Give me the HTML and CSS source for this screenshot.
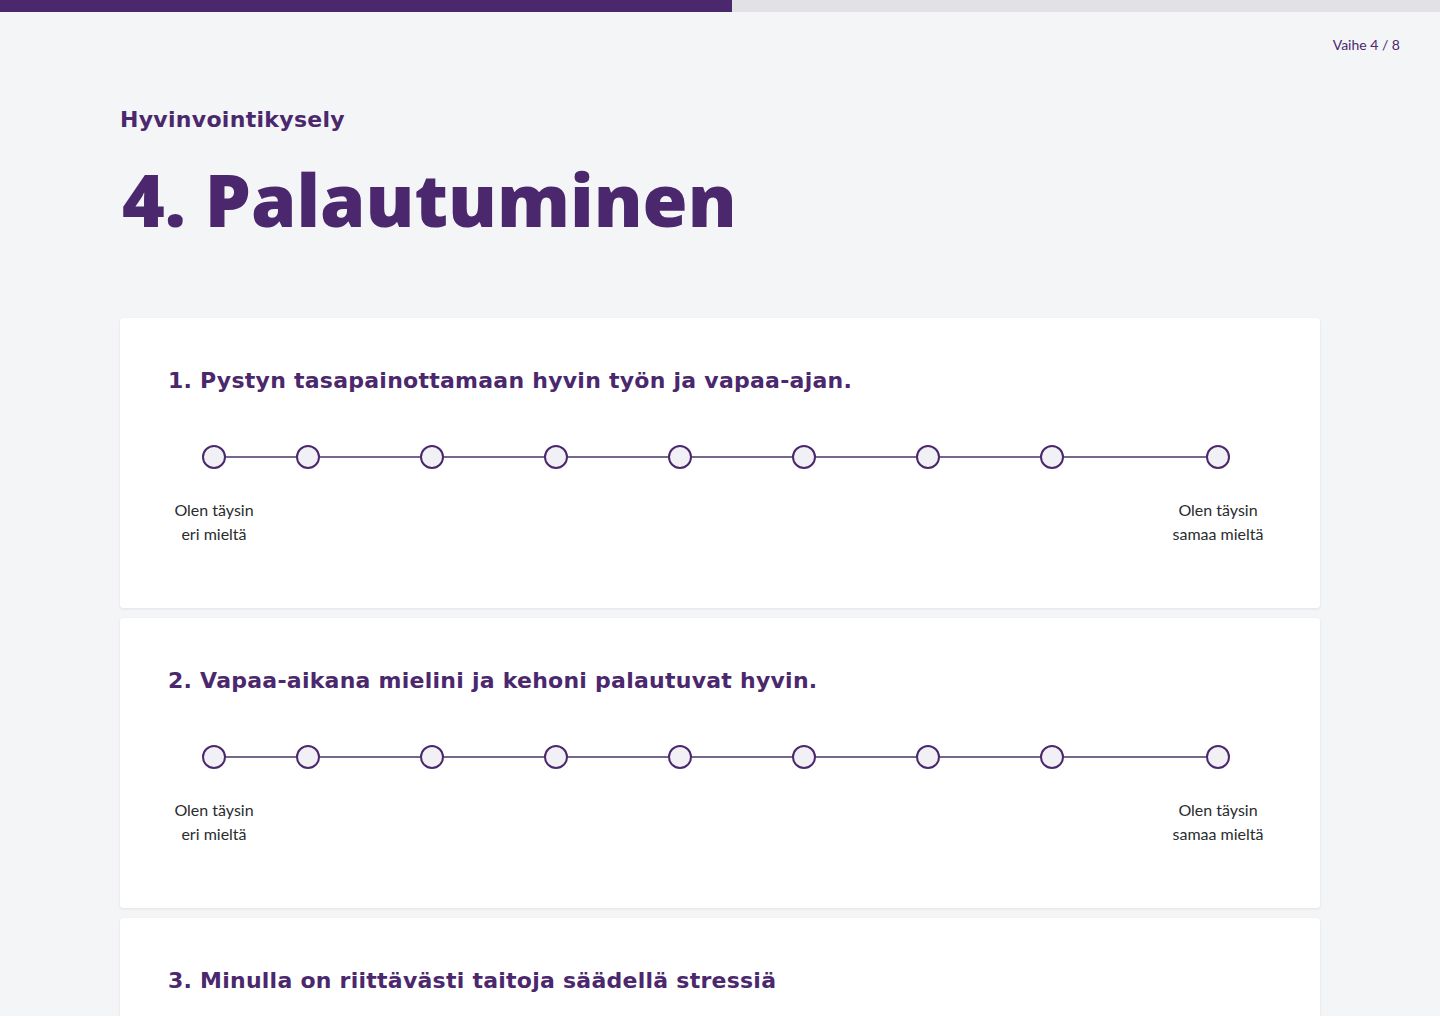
FILE: index.html
```html
<!DOCTYPE html>
<html lang="fi">
<head>
<meta charset="utf-8">
<title>Hyvinvointikysely</title>
<link rel="stylesheet" href="styles.css">
</head>
<body>
<div class="progress"><div class="progress-fill" style="width:50.83%"></div></div>
<div class="step">Vaihe 4 / 8</div>
<main class="wrap">
  <div class="eyebrow">Hyvinvointikysely</div>
  <h1 class="title">4. Palautuminen</h1>

  <section class="card">
    <h2 class="q">1. Pystyn tasapainottamaan hyvin työn ja vapaa-ajan.</h2>
    <div class="scale">
      <div class="end first"><span class="dot"></span><span class="lbl">Olen täysin<br>eri mieltä</span></div>
      <span class="dot"></span><span class="dot"></span><span class="dot"></span><span class="dot"></span><span class="dot"></span><span class="dot"></span><span class="dot"></span>
      <div class="end last"><span class="dot"></span><span class="lbl">Olen täysin<br>samaa mieltä</span></div>
    </div>
  </section>

  <section class="card">
    <h2 class="q">2. Vapaa-aikana mielini ja kehoni palautuvat hyvin.</h2>
    <div class="scale">
      <div class="end first"><span class="dot"></span><span class="lbl">Olen täysin<br>eri mieltä</span></div>
      <span class="dot"></span><span class="dot"></span><span class="dot"></span><span class="dot"></span><span class="dot"></span><span class="dot"></span><span class="dot"></span>
      <div class="end last"><span class="dot"></span><span class="lbl">Olen täysin<br>samaa mieltä</span></div>
    </div>
  </section>

  <section class="card">
    <h2 class="q">3. Minulla on riittävästi taitoja säädellä stressiä</h2>
    <div class="scale">
      <div class="end first"><span class="dot"></span><span class="lbl">Olen täysin<br>eri mieltä</span></div>
      <span class="dot"></span><span class="dot"></span><span class="dot"></span><span class="dot"></span><span class="dot"></span><span class="dot"></span><span class="dot"></span>
      <div class="end last"><span class="dot"></span><span class="lbl">Olen täysin<br>samaa mieltä</span></div>
    </div>
  </section>
</main>
</body>
</html>
```

FILE: styles.css
```css
* { box-sizing: border-box; }
html, body { margin: 0; padding: 0; }
body {
  background: #f4f5f7;
  font-family: "Lato", "Noto Sans", sans-serif;
  color: #2a2c2e;
  overflow: hidden;
  height: 1016px;
}
.progress {
  height: 12px;
  background: #e2e1e5;
}
.progress-fill {
  height: 100%;
  background: #4b286d;
}
.step {
  text-align: right;
  padding: 25px 40px 0 0;
  font-size: 14px;
  line-height: 16px;
  color: #4b286d;
}
.wrap {
  width: 1200px;
  margin: 0 auto;
}
.eyebrow {
  margin-top: 51px;
  font-family: "DejaVu Sans", sans-serif;
  font-weight: 700;
  font-size: 22px;
  line-height: 32px;
  color: #4b286d;
  letter-spacing: 0.3px;
}
.title {
  margin: 13px 0 0 2px;
  font-family: "Open Sans", sans-serif;
  font-weight: 800;
  font-size: 73px;
  line-height: 100px;
  letter-spacing: 0px;
  color: #4b286d;
}
.card {
  background: #fff;
  border-radius: 3px;
  box-shadow: 0 1px 3px rgba(40, 30, 70, 0.08), 0 0 1px rgba(40, 30, 70, 0.06);
  padding: 48px 48px 62px 48px;
  margin-bottom: 10px;
}
.wrap .card:first-of-type { margin-top: 69px; }
.q {
  margin: 0;
  font-family: "DejaVu Sans", sans-serif;
  font-weight: 700;
  font-size: 22px;
  line-height: 30px;
  color: #4b286d;
  letter-spacing: 0.25px;
}
.scale {
  position: relative;
  display: flex;
  align-items: flex-start;
  gap: 100px;
  margin-top: 49px;
  margin-left: -9px;
}
.scale::before {
  content: "";
  position: absolute;
  left: 55px;
  right: 55px;
  top: 11px;
  height: 2px;
  background: #75678e;
}
.dot {
  position: relative;
  display: block;
  flex: none;
  width: 24px;
  height: 24px;
  border-radius: 50%;
  border: 2px solid #4b286d;
  background: #f1f0f5;
}
.end {
  width: 110px;
  flex: none;
  display: flex;
  flex-direction: column;
  align-items: center;
}
.first { margin-right: -73px; }
.last { margin-left: -1px; }
.lbl {
  margin-top: 29px;
  text-align: center;
  font-size: 16px;
  line-height: 24px;
  color: #2a2c2e;
  white-space: nowrap;
}
```
